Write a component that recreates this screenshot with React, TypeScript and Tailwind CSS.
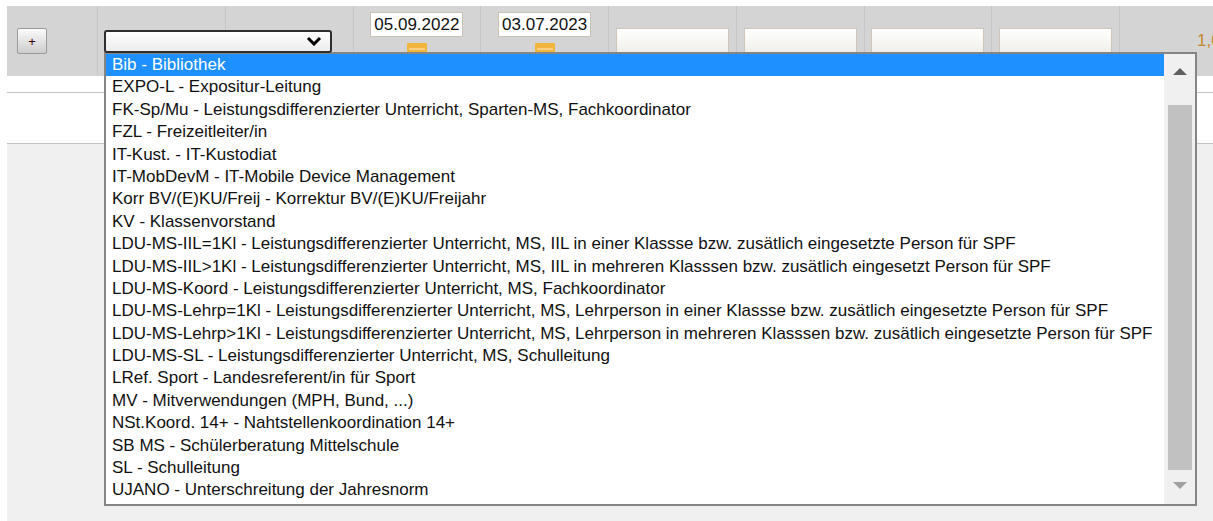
import React from "react";

const functions = [
  "Bib - Bibliothek",
  "EXPO-L - Expositur-Leitung",
  "FK-Sp/Mu - Leistungsdifferenzierter Unterricht, Sparten-MS, Fachkoordinator",
  "FZL - Freizeitleiter/in",
  "IT-Kust. - IT-Kustodiat",
  "IT-MobDevM - IT-Mobile Device Management",
  "Korr BV/(E)KU/Freij - Korrektur BV/(E)KU/Freijahr",
  "KV - Klassenvorstand",
  "LDU-MS-IIL=1Kl - Leistungsdifferenzierter Unterricht, MS, IIL in einer Klassse bzw. zusätlich eingesetzte Person für SPF",
  "LDU-MS-IIL>1Kl - Leistungsdifferenzierter Unterricht, MS, IIL in mehreren Klasssen bzw. zusätlich eingesetzt Person für SPF",
  "LDU-MS-Koord - Leistungsdifferenzierter Unterricht, MS, Fachkoordinator",
  "LDU-MS-Lehrp=1Kl - Leistungsdifferenzierter Unterricht, MS, Lehrperson in einer Klassse bzw. zusätlich eingesetzte Person für SPF",
  "LDU-MS-Lehrp>1Kl - Leistungsdifferenzierter Unterricht, MS, Lehrperson in mehreren Klasssen bzw. zusätlich eingesetzte Person für SPF",
  "LDU-MS-SL - Leistungsdifferenzierter Unterricht, MS, Schulleitung",
  "LRef. Sport - Landesreferent/in für Sport",
  "MV - Mitverwendungen (MPH, Bund, ...)",
  "NSt.Koord. 14+ - Nahtstellenkoordination 14+",
  "SB MS - Schülerberatung Mittelschule",
  "SL - Schulleitung",
  "UJANO - Unterschreitung der Jahresnorm",
];

const font = { fontFamily: '"Liberation Sans", Arial, sans-serif' };

const CalendarIcon = () => (
  <div className="w-[20px] h-[9px] bg-[#f2b53c] rounded-[1px] flex flex-col justify-end px-[2px] pb-[2px]">
    <div className="h-[2px] bg-[#f7d27e]" />
  </div>
);

const DateCell = ({ value }: { value: string }) => (
  <div className="border-l border-[#c6c6ca] flex flex-col items-center pt-[6px] gap-[6px]">
    <div className="w-[93px] h-[25px] border border-[#c9c3b6] bg-white flex items-center justify-center text-[17px] text-[#111]">
      {value}
    </div>
    <CalendarIcon />
  </div>
);

const EmptyInput = () => (
  <div className="border-l border-[#c6c6ca] flex items-center justify-center">
    <div className="w-[113px] h-[26px] border border-[#cdc6b8] bg-gradient-to-b from-white to-[#efeee9]" />
  </div>
);

export default function App() {
  return (
    <div className="relative w-[1213px] h-[521px] overflow-hidden bg-white pl-[7px] pt-[6px] flex flex-col" style={font}>
      {/* header row with the input controls */}
      <div className="grid grid-cols-[90px_repeat(9,127.75px)] h-[70px] bg-[#d4d4d4] shrink-0">
        <div className="flex items-center pl-[10px]">
          <button className="w-[30px] h-[26px] border border-[#9a9a9a] rounded-[2px] bg-gradient-to-b from-[#fbfbfb] to-[#cdcdcd] text-[13px] leading-none text-[#300] flex items-center justify-center">
            +
          </button>
        </div>
        <div className="relative z-10 border-l border-[#c6c6ca] flex items-center pl-[6px]">
          <div className="w-[228px] h-[23px] shrink-0 border-2 border-[#2e2e2e] rounded-[3px] bg-gradient-to-b from-white to-[#ececec] flex items-center justify-end pr-[8px]">
            <svg width="16" height="10" viewBox="0 0 16 10">
              <polyline points="2,2 8,8 14,2" fill="none" stroke="#000" strokeWidth="3" />
            </svg>
          </div>
        </div>
        <div className="border-l border-[#c6c6ca]" />
        <DateCell value="05.09.2022" />
        <DateCell value="03.07.2023" />
        <EmptyInput />
        <EmptyInput />
        <EmptyInput />
        <EmptyInput />
        <div className="border-l border-[#c6c6ca] flex items-center pl-[77px] text-[17px] text-[#c28a2c] whitespace-nowrap">
          1,00
        </div>
      </div>

      <div className="h-[17px] bg-white border-b border-[#c3c3c3] shrink-0" />
      <div className="h-[51px] bg-white border-b border-[#c3c3c3] shrink-0" />
      <div className="flex-1 bg-[#f0f0f0]" />

      {/* open dropdown list */}
      <div className="absolute left-[104px] top-[52px] w-[1093px] h-[454px] border-2 border-[#858585] bg-white flex">
        <ul className="flex-1 min-w-0">
          {functions.map((item, i) => (
            <li
              key={item}
              className={
                i === 0
                  ? "h-[22.4px] leading-[22.4px] px-[6px] text-[17px] whitespace-nowrap bg-[#1e90ff] text-white"
                  : "h-[22.4px] leading-[22.4px] px-[6px] text-[17px] whitespace-nowrap text-[#111]"
              }
            >
              {item}
            </li>
          ))}
        </ul>
        <div className="w-[31px] bg-[#f0f0f0] flex flex-col items-center pt-[14px]">
          <svg width="14" height="7" viewBox="0 0 14 7">
            <polygon points="0,7 7,0 14,7" fill="#606060" />
          </svg>
          <div className="mt-[30px] w-[24px] h-[365px] bg-[#c1c1c1]" />
          <svg className="mt-[12px]" width="14" height="7" viewBox="0 0 14 7">
            <polygon points="0,0 14,0 7,7" fill="#a0a0a0" />
          </svg>
        </div>
      </div>
    </div>
  );
}
